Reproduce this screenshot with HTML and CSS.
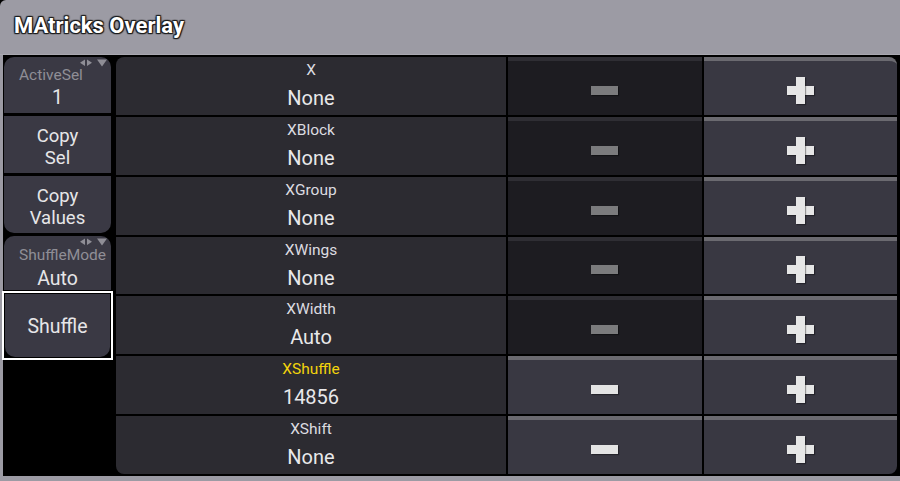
FILE: index.html
```html
<!DOCTYPE html>
<html lang="en">

<head>
    <meta charset="UTF-8">
    <title>MAtricks Overlay</title>
    <link rel="stylesheet" href="styles.css">
</head>

<body>

    <div class="window">
        <div class="titlebar">MAtricks Overlay</div>

        <div class="content">
            <div class="side">
                <div class="btn btn-first btn-prop">
                    <svg class="arrows" width="27" height="8" viewBox="0 0 27 8">
                        <polygon points="5,0.5 5,7 0,3.75" />
                        <polygon points="7,0.5 7,7 12,3.75" />
                        <polygon points="17,0.5 27,0.5 22,7.5" />
                    </svg>
                    <span class="btn-label">ActiveSel</span>
                    <span class="btn-value">1</span>
                </div>
                <div class="btn btn-text">Copy<br>Sel</div>
                <div class="btn btn-last btn-text">Copy<br>Values</div>

                <div class="btn btn-first btn-prop btn-short">
                    <svg class="arrows" width="27" height="8" viewBox="0 0 27 8">
                        <polygon points="5,0.5 5,7 0,3.75" />
                        <polygon points="7,0.5 7,7 12,3.75" />
                        <polygon points="17,0.5 27,0.5 22,7.5" />
                    </svg>
                    <span class="btn-label">ShuffleMode</span>
                    <span class="btn-value">Auto</span>
                </div>
                <div class="selected">
                    <div class="btn btn-last btn-fill">Shuffle</div>
                </div>
            </div>

            <div class="table">
                <div class="cell name first-row"><span class="name-label">X</span><span class="name-value">None</span></div>
                <div class="cell step off"><span class="minus"></span></div>
                <div class="cell step plus-cell top-right"><span class="plus"></span></div>

                <div class="cell name"><span class="name-label">XBlock</span><span class="name-value">None</span></div>
                <div class="cell step off"><span class="minus"></span></div>
                <div class="cell step plus-cell"><span class="plus"></span></div>

                <div class="cell name"><span class="name-label">XGroup</span><span class="name-value">None</span></div>
                <div class="cell step off"><span class="minus"></span></div>
                <div class="cell step plus-cell"><span class="plus"></span></div>

                <div class="cell name"><span class="name-label">XWings</span><span class="name-value">None</span></div>
                <div class="cell step off"><span class="minus"></span></div>
                <div class="cell step plus-cell"><span class="plus"></span></div>

                <div class="cell name"><span class="name-label">XWidth</span><span class="name-value">Auto</span></div>
                <div class="cell step off"><span class="minus"></span></div>
                <div class="cell step plus-cell"><span class="plus"></span></div>

                <div class="cell name"><span class="name-label active">XShuffle</span><span class="name-value">14856</span></div>
                <div class="cell step"><span class="minus"></span></div>
                <div class="cell step plus-cell"><span class="plus"></span></div>

                <div class="cell name last-row"><span class="name-label">XShift</span><span class="name-value">None</span></div>
                <div class="cell step"><span class="minus"></span></div>
                <div class="cell step plus-cell bottom-right"><span class="plus"></span></div>
            </div>
        </div>
    </div>

</body>

</html>
```

FILE: styles.css
```css
body {
    margin: 0;
    background: #000;
    font-family: Roboto, 'Liberation Sans', sans-serif;
    color: #e4e4e6;
}

.window {
    width: 900px;
    height: 481px;
    background: #9c9ba4;
    border-top-left-radius: 6px;
    display: flex;
    flex-direction: column;
    overflow: hidden;
}

.titlebar {
    height: 55px;
    box-sizing: border-box;
    padding: 12px 0 0 14px;
    font-size: 22px;
    font-weight: bold;
    line-height: 28px;
    color: #fff;
    text-shadow: 0 0 2px #1a1a1a, 1px 1px 1px #1a1a1a, -1px -1px 1px #1a1a1a, 1px -1px 1px #1a1a1a, -1px 1px 1px #1a1a1a;
    border-bottom: 1px solid #a9a8b0;
}

.content {
    flex: 1;
    margin: 0 0 5px 3px;
    background: #000;
    display: flex;
    gap: 5px;
    padding: 2px 3px 2px 1px;
    min-height: 0;
}

/* left buttons */

.side {
    width: 107px;
    display: flex;
    flex-direction: column;
}

.btn {
    position: relative;
    background: #3a3944;
    height: 56px;
    margin-bottom: 3px;
    display: flex;
    flex-direction: column;
    align-items: center;
    justify-content: center;
    font-size: 19.5px;
    line-height: 20px;
    text-align: center;
    color: #e6e6e8;
}

.btn-first {
    border-radius: 10px 10px 0 0;
}

.btn-last {
    border-radius: 0 0 10px 10px;
}

.btn-text {
    height: 57px;
    padding-top: 6px;
    box-sizing: border-box;
    font-size: 18.5px;
    line-height: 21.5px;
}

.btn-prop {
    justify-content: flex-start;
    padding-top: 9px;
    box-sizing: border-box;
}

.btn-short {
    height: 54px;
    margin-bottom: 1px;
    padding-top: 10px;
}

.btn-short .btn-value {
    margin-top: 3px;
}

.arrows {
    position: absolute;
    top: 2px;
    right: 4px;
    fill: #8f8e96;
}

.btn-label {
    align-self: flex-start;
    margin-left: 15px;
    font-size: 15.5px;
    line-height: 18px;
    color: #8f8e96;
}

.btn-value {
    margin-top: 2px;
    line-height: 24px;
}

.selected {
    margin: 0 -2px;
    height: 69px;
    box-sizing: border-box;
    border: 2px solid #fff;
    padding: 1px;
    background: #000;
}

.btn-fill {
    height: 100%;
    margin: 0;
    padding-top: 2px;
    box-sizing: border-box;
}

/* value table */

.table {
    flex: 1;
    display: grid;
    grid-template-columns: 390px 1fr 1fr;
    grid-template-rows: repeat(7, 1fr);
    gap: 2px;
}

.cell {
    background: #2c2b31;
    box-sizing: border-box;
}

.name {
    display: flex;
    flex-direction: column;
    align-items: center;
    padding-top: 4px;
}

.name-label {
    font-size: 15.5px;
    line-height: 18px;
    color: #dcdce0;
}

.name-label.active {
    color: #f2d30c;
}

.name-value {
    margin-top: 7px;
    font-size: 20px;
    line-height: 24px;
    color: #e8e8ea;
}

.first-row {
    border-top-left-radius: 8px;
}

.last-row {
    border-bottom-left-radius: 8px;
}

.step {
    background: #393842;
    border-top: 4px solid #6b6a70;
    display: flex;
    align-items: center;
    justify-content: center;
    padding-top: 5px;
}

.step.off {
    background: #1d1c21;
    border-top-color: #2f2e34;
}

.top-right {
    border-top-right-radius: 8px;
}

.bottom-right {
    border-bottom-right-radius: 8px;
}

.minus {
    width: 27px;
    height: 9px;
    background: #e4e4e4;
    box-shadow: 1px 1px 1px rgba(0, 0, 0, 0.35);
}

.off .minus {
    background: #7b7b7d;
}

.plus {
    position: relative;
    width: 27px;
    height: 27px;
}

.plus::before,
.plus::after {
    content: "";
    position: absolute;
    background: #e6e6e6;
    box-shadow: 1px 1px 1px rgba(0, 0, 0, 0.35);
}

.plus::before {
    left: 0;
    top: 9px;
    width: 27px;
    height: 9px;
}

.plus::after {
    left: 9px;
    top: 0;
    width: 9px;
    height: 27px;
}
```
